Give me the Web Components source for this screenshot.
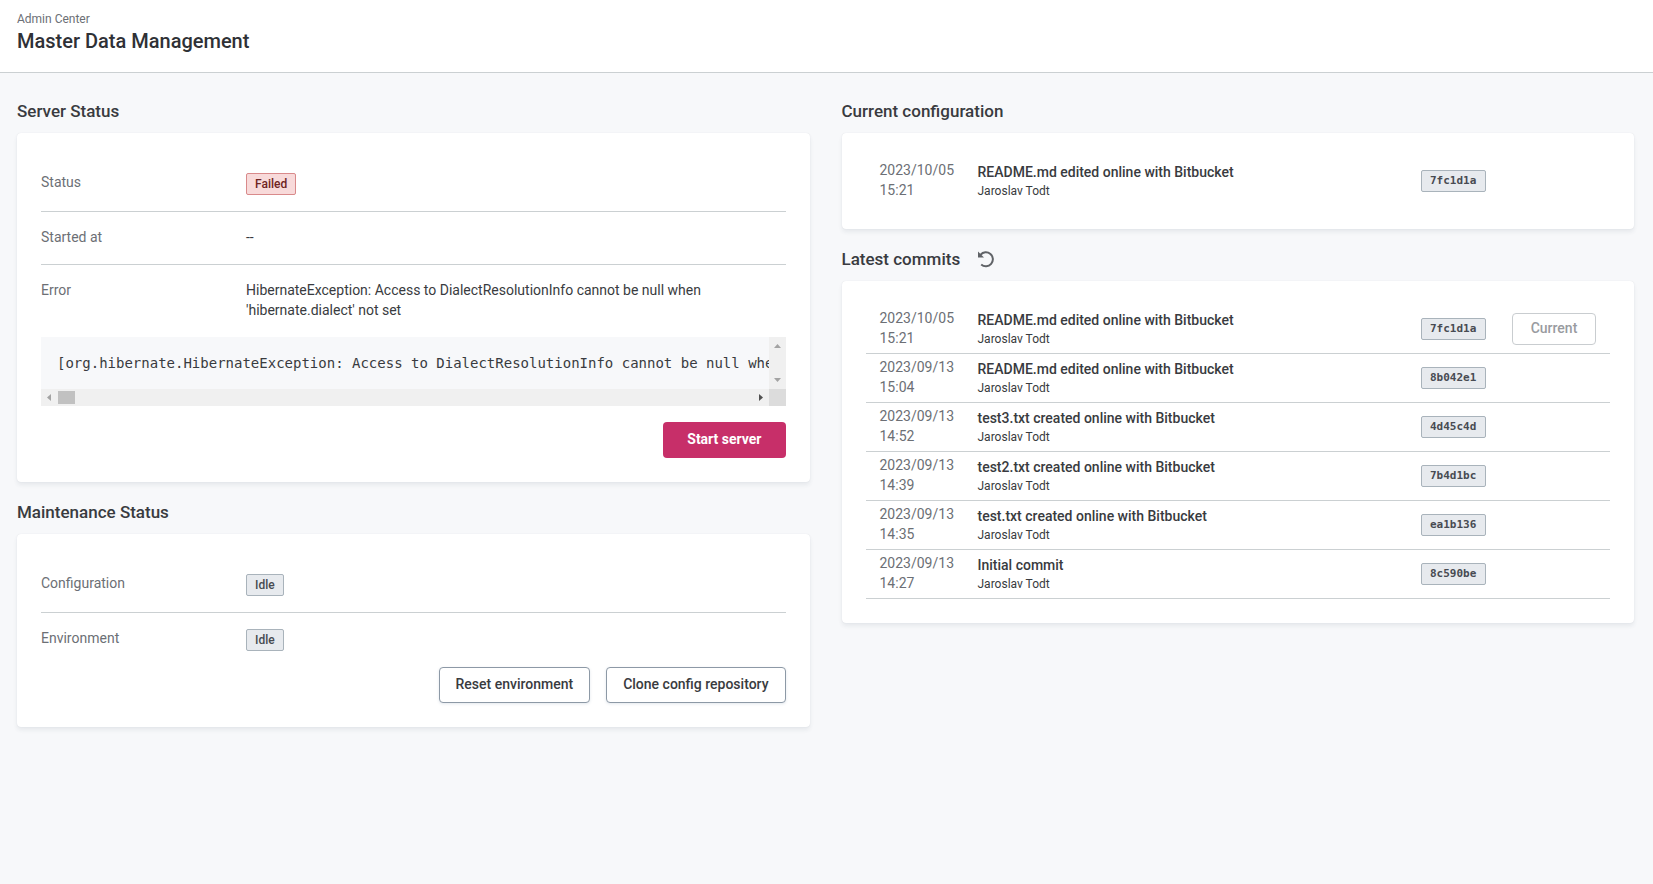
<!DOCTYPE html>
<html lang="en">
<head>
<meta charset="utf-8">
<meta name="viewport" content="width=device-width, initial-scale=1">
<title>Master Data Management – Admin Center</title>
<style>
  html { background: #f7f8fa; }
  body {
    margin: 0;
    font: 14px/20px Roboto, "Liberation Sans", sans-serif;
    color: #393b40;
    --muted: #6c6f75;
    --line: #cbd0d2;
    --mono: "DejaVu Sans Mono", "Liberation Mono", monospace;
  }
  main {
    display: grid;
    grid-template-columns: minmax(0, 1fr) minmax(0, 1fr);
    gap: 32px;
    align-items: start;
    padding: 8px 19px 32px 17px;
  }
</style>
</head>
<body>
<page-header><span slot="crumb">Admin Center</span>Master Data Management</page-header>
<main>
  <div>
    <panel-section>
      <span slot="title">Server Status</span>
      <status-row label="Status"><status-tag tone="error">Failed</status-tag></status-row>
      <status-row label="Started at">--</status-row>
      <status-row label="Error">HibernateException: Access to DialectResolutionInfo cannot be null when 'hibernate.dialect' not set</status-row>
      <log-view>[org.hibernate.HibernateException: Access to DialectResolutionInfo cannot be null when</log-view>
      <action-bar><ui-button kind="primary">Start server</ui-button></action-bar>
    </panel-section>
    <panel-section>
      <span slot="title">Maintenance Status</span>
      <status-row label="Configuration"><status-tag>Idle</status-tag></status-row>
      <status-row label="Environment"><status-tag>Idle</status-tag></status-row>
      <action-bar>
        <ui-button>Reset environment</ui-button>
        <ui-button>Clone config repository</ui-button>
      </action-bar>
    </panel-section>
  </div>
  <div>
    <panel-section>
      <span slot="title">Current configuration</span>
      <commit-table source="current" label="Current configuration" plain></commit-table>
    </panel-section>
    <panel-section>
      <span slot="title">Latest commits</span>
      <refresh-button slot="tools"></refresh-button>
      <commit-table source="latest" label="Latest commits"></commit-table>
    </panel-section>
  </div>
</main>

<script>
class BaseElement extends HTMLElement {
  connectedCallback() {
    if (this.shadowRoot) return;
    this.attachShadow({ mode: "open" }).innerHTML = this.render();
  }
}

customElements.define("page-header", class extends BaseElement {
  render() {
    return `<style>
      :host { display: block; background: #fff; border-bottom: 1px solid var(--line); }
      header { padding: 11px 17px 17px; }
      p, h1 { margin: 0; }
      p { font-size: 12px; line-height: 16px; color: var(--muted); }
      h1 { font-size: 20px; line-height: 28px; font-weight: 500; color: #2f3136; }
    </style>
    <header><p><slot name="crumb"></slot></p><h1><slot></slot></h1></header>`;
  }
});

customElements.define("panel-section", class extends BaseElement {
  render() {
    return `<style>
      :host { display: block; }
      .head { display: flex; align-items: center; gap: 18px; padding: 17px 0 9px; }
      h2 { margin: 0; font-size: 17px; line-height: 26px; font-weight: 500; }
      .card { background: #fff; border-radius: 4px; padding: 24px;
        box-shadow: 0 0 1px rgba(40, 60, 80, .14), 0 3px 4px rgba(40, 60, 80, .08); }
    </style>
    <section>
      <div class="head"><h2><slot name="title"></slot></h2><slot name="tools"></slot></div>
      <div class="card"><slot></slot></div>
    </section>`;
  }
});

customElements.define("status-row", class extends BaseElement {
  render() {
    return `<style>
      :host { display: block; }
      dl { display: grid; grid-template-columns: 205px minmax(0, 1fr); margin: 0;
        border-bottom: 1px solid var(--line); }
      dt, dd { margin: 0; padding: 15px 0 17px; }
      dt { color: var(--muted); }
      dd { padding-right: 60px; }
      :host(.tagged) dd { padding: 16px 0; }
      :host(.last) dl { border-bottom: 0; }
    </style>
    <dl><dt>${this.getAttribute("label")}</dt><dd><slot></slot></dd></dl>`;
  }
  connectedCallback() {
    super.connectedCallback();
    const next = this.nextElementSibling;
    this.classList.toggle("last", !next || next.localName !== "status-row");
    this.classList.toggle("tagged", !!this.querySelector("status-tag"));
  }
});

customElements.define("status-tag", class extends BaseElement {
  render() {
    return `<style>
      :host { display: block; width: fit-content; box-sizing: border-box; padding: 0 8px;
        border: 1px solid #a9b3bb; border-radius: 2px; background: #e7eaee; color: #484b52;
        font-size: 12px; line-height: 20px; font-weight: 500; }
      :host([tone="error"]) { background: #f8dada; border-color: #d98a8b; color: #6e2422; }
      :host([mono]) { padding-right: 9px; font: 700 11px/20px var(--mono); }
    </style><slot></slot>`;
  }
});

customElements.define("log-view", class extends BaseElement {
  render() {
    return `<style>
      :host { display: grid; grid-template-columns: minmax(0, 1fr) 17px; grid-template-rows: auto 17px;
        background: #f7f8fa; }
      pre { margin: 0; padding: 16px; overflow: hidden; font: 14px/20px var(--mono); }
      .bar { display: flex; justify-content: space-between; align-items: center; background: #f0f0f0; }
      .v { flex-direction: column; }
      .thumb { width: 17px; height: 13px; background: #c1c1c1; margin-right: auto; }
      .corner { background: #dcdcdc; }
      svg { display: block; width: 17px; height: 17px; fill: #a3a3a3; }
      .on { fill: #505050; }
    </style>
    <pre><slot></slot></pre>
    <div class="bar v">
      <svg viewBox="0 0 17 17"><path d="M5 11h7L8.500 7z"/></svg>
      <svg viewBox="0 0 17 17"><path d="M5 6h7L8.500 10z"/></svg>
    </div>
    <div class="bar">
      <svg viewBox="0 0 17 17"><path d="M10 5v7L6 8.500z"/></svg>
      <div class="thumb"></div>
      <svg class="on" viewBox="0 0 17 17"><path d="M7 5v7l4-3.500z"/></svg>
    </div>
    <div class="corner"></div>`;
  }
});

customElements.define("action-bar", class extends BaseElement {
  render() {
    return `<style>
      :host { display: flex; justify-content: flex-end; gap: 16px; }
      :host(.spaced) { padding-top: 16px; }
    </style><slot></slot>`;
  }
  connectedCallback() {
    super.connectedCallback();
    const prev = this.previousElementSibling;
    this.classList.toggle("spaced", !!prev && prev.localName === "log-view");
  }
});

customElements.define("ui-button", class extends BaseElement {
  render() {
    return `<style>
      :host { display: block; }
      button { display: block; box-sizing: border-box; height: 36px; padding: 0 16px 2px; margin: 0;
        border: 1px solid #8d99a6; border-radius: 4px; background: #fff; color: inherit;
        font: 500 14px/20px Roboto, "Liberation Sans", sans-serif; white-space: nowrap;
        box-shadow: 0 1px 3px rgba(60, 90, 130, .14); }
      :host([kind="primary"]) button { padding: 0 24px 2px; border: 0; background: #c72f69; color: #fff;
        font-weight: 700; box-shadow: none; }
      :host([kind="small"]) button { width: 84px; height: 32px; border-color: #c9cdd0; color: #999b9f;
        box-shadow: none; }
    </style>
    <button type="button"${this.hasAttribute("disabled") ? " disabled" : ""}><slot></slot></button>`;
  }
});

customElements.define("refresh-button", class extends BaseElement {
  render() {
    return `<style>
      :host { display: block; }
      button { display: block; padding: 0; border: 0; background: none; color: #606367; }
      svg { display: block; width: 16px; height: 17px; }
    </style>
    <button type="button" aria-label="Refresh commits">
      <svg viewBox="0 0 16 17" fill="none" stroke="currentColor" stroke-width="2">
        <path d="M2.500 3.800A7 7 0 1 1 3.200 13.500"/>
        <path d="M0 .5V6.400H6z" fill="currentColor" stroke="none"/>
      </svg>
    </button>`;
  }
});

const commits = [
  ["2023/10/05", "15:21", "README.md edited online with Bitbucket", "7fc1d1a"],
  ["2023/09/13", "15:04", "README.md edited online with Bitbucket", "8b042e1"],
  ["2023/09/13", "14:52", "test3.txt created online with Bitbucket", "4d45c4d"],
  ["2023/09/13", "14:39", "test2.txt created online with Bitbucket", "7b4d1bc"],
  ["2023/09/13", "14:35", "test.txt created online with Bitbucket", "ea1b136"],
  ["2023/09/13", "14:27", "Initial commit", "8c590be"]
];

customElements.define("commit-table", class extends BaseElement {
  render() {
    const latest = this.getAttribute("source") === "latest";
    const rows = (latest ? commits : commits.slice(0, 1)).map(([date, time, message, hash], i) => `
      <tr>
        <td class="date">${date}<br>${time}</td>
        <td><div class="message">${message}</div><div class="author">Jaroslav Todt</div></td>
        <td><status-tag mono>${hash}</status-tag></td>
        <td>${latest && i === 0 ? `<ui-button kind="small" disabled>Current</ui-button>` : ""}</td>
      </tr>`).join("");
    return `<style>
      :host { display: block; }
      table { width: 100%; table-layout: fixed; border-spacing: 0; }
      td { padding: 4px 0; vertical-align: middle; border-bottom: 1px solid var(--line); }
      :host([plain]) td { border-bottom: 0; }
      .c-date { width: 112px; }
      .c-hash { width: 91px; }
      .c-action { width: 98px; }
      td.date { padding: 3px 0 5px 14px; color: var(--muted); }
      .message { font-weight: 500; }
      .author { font-size: 12px; line-height: 18px; }
    </style>
    <table aria-label="${this.getAttribute("label")}">
      <colgroup><col class="c-date"><col><col class="c-hash"><col class="c-action"></colgroup>
      <tbody>${rows}</tbody>
    </table>`;
  }
});
</script>
</body>
</html>
